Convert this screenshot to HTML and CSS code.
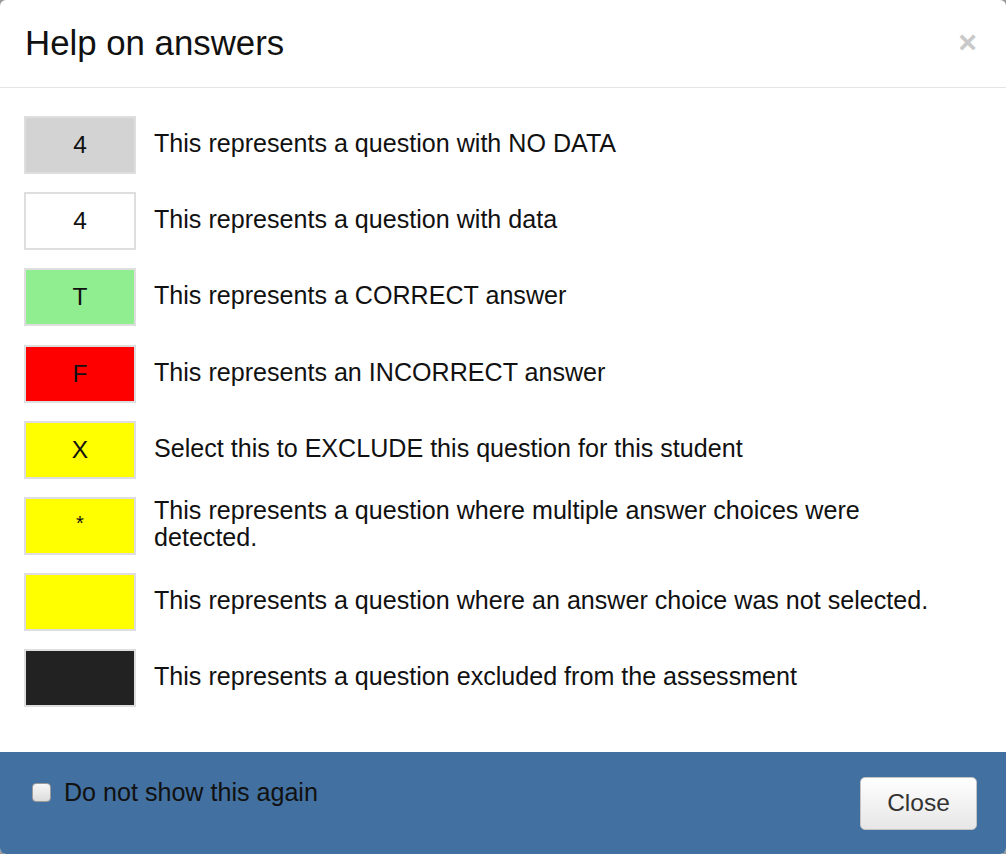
FILE: index.html
```html
<!DOCTYPE html>
<html lang="en">
<head>
<meta charset="utf-8">
<title>Help on answers</title>
<link rel="stylesheet" href="styles.css">
</head>
<body>
<div class="modal">
  <div class="modal-header">
    <h4 class="modal-title">Help on answers</h4>
    <button class="close" type="button" aria-label="Close">×</button>
  </div>
  <div class="modal-body">
    <div class="row"><div class="swatch nodata">4</div><div class="desc">This represents a question with NO DATA</div></div>
    <div class="row"><div class="swatch data">4</div><div class="desc">This represents a question with data</div></div>
    <div class="row"><div class="swatch correct">T</div><div class="desc">This represents a CORRECT answer</div></div>
    <div class="row"><div class="swatch incorrect">F</div><div class="desc">This represents an INCORRECT answer</div></div>
    <div class="row"><div class="swatch warn">X</div><div class="desc">Select this to EXCLUDE this question for this student</div></div>
    <div class="row"><div class="swatch warn star">*</div><div class="desc">This represents a question where multiple answer choices were detected.</div></div>
    <div class="row"><div class="swatch warn"></div><div class="desc">This represents a question where an answer choice was not selected.</div></div>
    <div class="row"><div class="swatch excluded"></div><div class="desc">This represents a question excluded from the assessment</div></div>
  </div>
  <div class="modal-footer">
    <label class="check"><input type="checkbox" class="cb"><span>Do not show this again</span></label>
    <button class="btn" type="button">Close</button>
  </div>
</div>
</body>
</html>
```

FILE: styles.css
```css
html, body {
  margin: 0;
  padding: 0;
  height: 100%;
}
body {
  background: #9a9a9a;
  font-family: "Liberation Sans", Arial, Helvetica, sans-serif;
  color: #111;
}
.modal {
  width: 100%;
  height: 100vh;
  background: #fff;
  border-radius: 6px;
  overflow: hidden;
  display: flex;
  flex-direction: column;
  box-sizing: border-box;
}
.modal-header {
  height: 87px;
  border-bottom: 1px solid #e5e5e5;
  display: flex;
  align-items: center;
  justify-content: space-between;
  padding: 0 29px 0 25px;
  flex: none;
}
.modal-title {
  margin: 0;
  font-size: 34.8px;
  font-weight: normal;
  line-height: 1;
  color: #111;
}
.close {
  border: 0;
  background: none;
  padding: 0;
  margin-top: -4px;
  font-family: "Liberation Sans", Arial, sans-serif;
  font-size: 32px;
  font-weight: bold;
  line-height: 1;
  color: #c9c9c9;
  cursor: pointer;
}
.modal-body {
  flex: 1;
  padding: 28px 26px 0 24px;
  display: flex;
  flex-direction: column;
  gap: 18.2px;
}
.row {
  display: flex;
  align-items: center;
  gap: 18px;
}
.swatch {
  flex: none;
  width: 112px;
  height: 58px;
  box-sizing: border-box;
  border: 2px solid #dedede;
  display: flex;
  align-items: center;
  justify-content: center;
  font-size: 24.5px;
  color: #111;
}
.swatch.star {
  font-size: 20px;
  padding-bottom: 4px;
}
.nodata { background: #d3d3d3; }
.data { background: #fff; }
.correct { background: #90ee90; }
.incorrect { background: #ff0000; }
.warn { background: #ffff00; }
.excluded { background: #222; }
.desc {
  font-size: 25.1px;
  line-height: 27px;
  color: #111;
  max-width: 800px;
  padding-bottom: 3px;
}
.modal-footer {
  flex: none;
  height: 102px;
  background: #4270a0;
  display: flex;
  justify-content: space-between;
  align-items: center;
  padding: 0 29px 0 32px;
  box-sizing: border-box;
}
.check {
  display: flex;
  align-items: center;
  gap: 13px;
  font-size: 25.1px;
  line-height: 27px;
  color: #111;
  margin-bottom: 21px;
}
.cb {
  -webkit-appearance: none;
  appearance: none;
  margin: 0;
  width: 19px;
  height: 19px;
  border: 1px solid #9b9b9b;
  border-radius: 4px;
  background: linear-gradient(#f7f7f7, #dcdcdc);
  box-sizing: border-box;
}
.btn {
  width: 117px;
  height: 53px;
  border: 1px solid #c4c4c4;
  border-radius: 5px;
  background: linear-gradient(#ffffff, #e6e6e6);
  font-family: "Liberation Sans", Arial, sans-serif;
  font-size: 24.5px;
  color: #333;
  padding: 0;
}
```
